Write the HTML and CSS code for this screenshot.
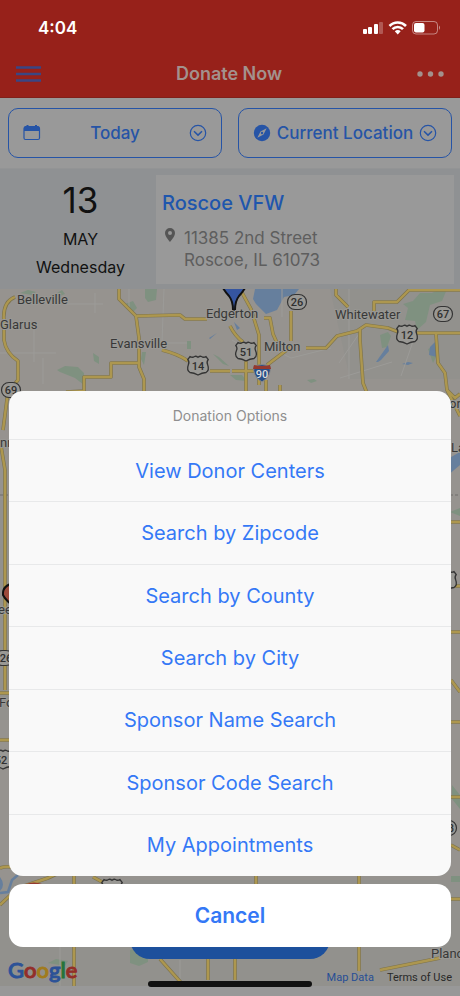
FILE: index.html
```html
<!DOCTYPE html>
<html lang="en">
<head>
<meta charset="utf-8">
<meta name="viewport" content="width=device-width, initial-scale=1">
<title>Donate Now</title>
<link rel="stylesheet" href="styles.css">
</head>
<body>
<div class="app">
  <header class="header">
    <div class="status">
      <span class="time">4:04</span>
      <svg class="status-icons" width="80" height="16" viewBox="0 0 80 16" aria-hidden="true">
        <g fill="#fff">
          <rect x="1" y="9" width="4" height="5" rx="1"/>
          <rect x="6" y="7" width="4" height="7" rx="1"/>
          <rect x="12" y="4" width="4" height="10" rx="1"/>
          <rect x="17" y="2" width="4" height="12" rx="1" opacity=".25"/>
        </g>
        <g fill="none" stroke="#fff" stroke-width="2.6">
          <path d="M27.5 6a11.5 11.5 0 0 1 16.500 0"/>
          <path d="M30.500 9.200a7.300 7.300 0 0 1 10.500 0"/>
        </g>
        <path d="M32.800 11.300a4.300 4.300 0 0 1 5.900 0L35.700 14.500z" fill="#fff"/>
        <rect x="50.500" y="1.500" width="25" height="12.500" rx="3.500" fill="none" stroke="#fff" stroke-opacity=".45"/>
        <rect x="52" y="3" width="10.500" height="9.500" rx="2" fill="#fff"/>
        <path d="M77 5.500q2 2.200 0 4.500z" fill="#fff" opacity=".5"/>
      </svg>
    </div>
    <nav class="nav">
      <button class="icon-button" type="button" aria-label="Menu">
        <svg width="26" height="18" viewBox="0 0 26 18"><path d="M0 2.500h25M0 9h25M0 15.500h25" stroke="#3a4684" stroke-width="2.600"/></svg>
      </button>
      <h1 class="title">Donate Now</h1>
      <button class="icon-button" type="button" aria-label="More">
        <svg width="28" height="18" viewBox="0 0 28 18" fill="#a3918d"><circle cx="4" cy="9" r="2.700"/><circle cx="14.500" cy="9" r="2.700"/><circle cx="25" cy="9" r="2.700"/></svg>
      </button>
    </nav>
  </header>

  <div class="filters">
    <button class="filter" type="button">
      <svg width="18" height="18" viewBox="0 0 18 18"><rect x="1" y="3" width="15.500" height="12.500" rx="1.500" fill="none" stroke="currentColor" stroke-width="1.200"/><path d="M1 7V3.500Q1 2 2.500 2H15q1.500 0 1.500 1.500V7zM3.500 1h2v2h-2zM12 1h2v2h-2z" fill="currentColor"/></svg>
      <span>Today</span>
      <svg width="18" height="18" viewBox="0 0 18 18" fill="none" stroke="currentColor" stroke-width="1.200"><circle cx="9" cy="9" r="7.700"/><path d="M5 7.300l4 3.800 4-3.800" stroke-width="1.500"/></svg>
    </button>
    <button class="filter" type="button">
      <svg width="18" height="18" viewBox="0 0 18 18"><circle cx="9" cy="9" r="8.200" fill="currentColor"/><path d="M13.600 4.200L10.500 10.500 4.400 13.700 7.500 7.500z" fill="#999"/><circle cx="9" cy="9" r="1.200" fill="currentColor"/></svg>
      <span>Current Location</span>
      <svg width="18" height="18" viewBox="0 0 18 18" fill="none" stroke="currentColor" stroke-width="1.200"><circle cx="9" cy="9" r="7.700"/><path d="M5 7.300l4 3.800 4-3.800" stroke-width="1.500"/></svg>
    </button>
  </div>

  <section class="event">
    <div class="date">
      <span class="day">13</span>
      <span>MAY</span>
      <span>Wednesday</span>
    </div>
    <div class="card">
      <h2 class="place">Roscoe VFW</h2>
      <div class="address">
        <svg width="12" height="16" viewBox="0 0 12 16"><path fill-rule="evenodd" d="M6 1a5 5 0 0 0-5 5c0 3.600 5 9 5 9s5-5.400 5-9a5 5 0 0 0-5-5zm0 3a2 2 0 1 1 0 4 2 2 0 0 1 0-4z" fill="#555"/></svg>
        <p>11385 2nd Street<br>Roscoe, IL 61073</p>
      </div>
    </div>
  </section>

  <main class="map">
    <svg class="map-art" viewBox="0 289 460 697" preserveAspectRatio="xMidYMin slice" aria-hidden="true">
      <defs>
        <g id="us-shield"><path d="M-8-9.500q2.500 1.500 4.500 0q1.500-.8 3.500.8q2-1.600 3.500-.8q2 1.500 4.500 0l2.200 3q-2 2.500-.5 5.500q2 5-1.700 7.500q-4 .2-8 2.500q-4-2.300-8-2.500q-3.700-2.500-1.700-7.500q1.500-3-.5-5.500z" fill="#999894" stroke="#343434" stroke-width="1.300"/></g>
        <rect id="state-shield" x="-9.500" y="-7.500" width="19" height="15" rx="7.500" fill="#999894" stroke="#343434" stroke-width="1.200"/>
        <path id="roads" d="M15 297Q2 302 4 322V340Q6 353 18 361V380L8 392 3 430M119 289v10l17 17 3 22v29l5 12v20M137 316l43-1 5 4h22M162 350q16 4 26 11M210 371h20M66 392l18-1v-14h27v-14h28M240 289l11 20 8 26v50M230 326q5 10 13 16M232 371h22M246 360v40M291 311v30M306 348h20l11-12 20-5 9-6 22 3 13 5h59M267 365l25-19M264 318h6l3 16 4 9M336 289v6l12 12M374 311v-9h23l12-12h51M436 334l2 29 7 10 2 17 8 8 5-4M360 330v10l3 43 4 10M266 380v15M280 385v14M0 440l5 30v220M0 693h9M0 740h9M447 390l13 26M451 522h9M451 586h9M451 632h9M451 680l9 12M451 722h9M451 797h9M451 845l9 5M0 868q12-4 22 5M0 905l18-17 30-10 17-8M74 865v121M93 877l13 7M160 959l24 27M208 959v21M235 959v21M256 865v20M359 876v95M380 970l60-12M451 899h9"/>
      </defs>
      <rect y="289" width="460" height="697" fill="#96938f"/>
      <path d="M0 500h70v220H0zM330 289h130v90H350zM0 880h460v106H0z" fill="#92918d"/>
      <g fill="#7f9180">
        <path d="M145 289h12l-1 11-8 2-3-4zM125 304l8-3 4 7-4 4zM57 370l8-4 13 1 6 6v12l-9-7-15-6zM93 353l6 4v7l-5-3zM403 304l10-3 7-8 12 0 8-4h7l-5 12-12 4-4 17-9 8-2-9-10-1 3-12-5-4zM380 335l8-3 3 4-4 11-5 1zM428 349l6-3 3 9-4 8zM187 341h4v8h-4zM213 354l6 3 10 9-6-2zM142 352h4l-2 13-3-6zM450 512l10-4v8zM452 785l8 10v14l-8-10zM451 876h9v6h-9zM130 950l10-2 8 8v6l-9 4-9-3zM48 963l8-4 12 2-3 5z"/>
        <path d="M20 293l8-3 8 2-4 3zM57 293l5-3 3 4-5 2zM230 375h12l5 6-11-1zM307 380l7-1 3 2-6 2z"/>
      </g>
      <g fill="#667f9d">
        <path d="M255 289h44l-5 6-10 2-7 13-11 4-10-10-3-5zM430 347l8-8-1 18-8-2zM376 362l12-17 1 6-8 9-3 2zM402 364l6-2 5 1-5 2zM209 338l8-5-7 6zM444 461l16-9v13l-13 11zM234 322l6 6-3 2zM0 877q6 8 0 14z"/>
      </g>
      <g fill="none" stroke="#9c9b98" stroke-width="1">
        <path d="M0 353h56M34 329v33M65 304h38M95 293v20M129 289v20M164 289l-2 53M127 343h60M43 384v-26M275 350l16 8 40-10M282 289v28M363 328l-24 35M340 378l52-16M417 330l-16 46M349 289v90M232 340l17 10M60 915v71M180 960v26"/>
      </g>
      <path d="M0 495h460" fill="none" stroke="#6e6d6a" stroke-width="1" stroke-dasharray="3 2"/>
      <g fill="none" stroke-linejoin="round">
        <use href="#roads" stroke="#7d734c" stroke-width="3.600"/>
        <use href="#roads" stroke="#ad974f" stroke-width="2.400"/>
      </g>
      <path d="M0 893l8-1 4-12 6-5" fill="none" stroke="#667f9d" stroke-width="2.500"/>
      <path d="M223 288q3 5 6 8 4 5 4 14h2q0-9 4-14 3-3 6-8z" fill="#3555a0" stroke="#111" stroke-width="2"/>
      <path d="M15 583q-13 2-12 12 3 6 12 12z" fill="#9c4a3b" stroke="#111" stroke-width="2"/>
      <use href="#us-shield" x="198" y="366"/><use href="#us-shield" x="246" y="352"/><use href="#us-shield" x="407" y="335"/>
      <use href="#us-shield" x="3" y="760"/><use href="#us-shield" x="112" y="889"/><use href="#us-shield" x="446" y="581"/>
      <use href="#state-shield" x="11" y="390"/><use href="#state-shield" x="297" y="302"/><use href="#state-shield" x="443" y="314"/>
      <use href="#state-shield" x="4" y="658"/><use href="#state-shield" x="447" y="828"/>
      <path d="M254 366q8-3 16 0 2 10-8 16-10-6-8-16z" fill="#294f87" stroke="#888"/><path d="M254 365q8 2 16 0l1 4h-18z" fill="#95392f"/>
      <path d="M26 884q8-3 16 0v5H26z" fill="#95392f"/>
      <g class="route-label">
        <text x="11" y="394">69</text><text x="198" y="370">14</text><text x="246" y="356">51</text><text x="297" y="306">26</text><text x="443" y="318">67</text><text x="407" y="339">12</text><text x="6" y="662">26</text><text x="1" y="764">52</text><text x="451" y="832">8</text><text x="262" y="378" fill="#ddd">90</text>
      </g>
      <g class="town-label">
        <text x="17" y="304">Belleville</text><text x="0" y="329">Glarus</text><text x="110" y="348">Evansville</text><text x="206" y="318">Edgerton</text><text x="264" y="351">Milton</text><text x="335" y="319">Whitewater</text><text x="0" y="447">nn</text><text x="-2" y="614">ee</text><text x="-1" y="707">Fo</text><text x="449" y="408">or</text><text x="451" y="452">La</text><text x="431" y="958">Plano</text>
      </g>
    </svg>
    <div class="map-action" aria-hidden="true"></div>
    <footer class="map-footer">
      <span class="google"><span class="g-blue">G</span><span class="g-red">o</span><span class="g-yellow">o</span><span class="g-blue">g</span><span class="g-green">l</span><span class="g-red">e</span></span>
      <span class="legal"><a class="data-link" href="#">Map Data</a><a href="#">Terms of Use</a></span>
    </footer>
  </main>

  <div class="sheet" role="dialog" aria-labelledby="sheet-title">
    <div class="options">
      <h2 class="options-title" id="sheet-title">Donation Options</h2>
      <div class="option-list">
        <button class="option" type="button">View Donor Centers</button>
        <button class="option" type="button">Search by Zipcode</button>
        <button class="option" type="button">Search by County</button>
        <button class="option" type="button">Search by City</button>
        <button class="option" type="button">Sponsor Name Search</button>
        <button class="option" type="button">Sponsor Code Search</button>
        <button class="option" type="button">My Appointments</button>
      </div>
    </div>
    <button class="cancel" type="button">Cancel</button>
  </div>
  <div class="home-indicator"></div>
</div>
</body>
</html>
```
FILE: styles.css
```css
* { box-sizing: border-box; }
body { margin: 0; font-family: Inter, "Liberation Sans", sans-serif; background: #999; }
h1, h2, p { margin: 0; font-weight: 400; }
button { border: 0; padding: 0; background: none; font: inherit; color: inherit; }
a { color: inherit; text-decoration: none; }
svg { display: block; flex: none; }

.app { position: relative; display: flex; flex-direction: column; min-height: 100vh; }

.header { background: #97211a; padding: 12px 16px 0; border-bottom: 1px solid #80201a; }
.status { display: flex; align-items: center; justify-content: space-between; height: 32px; padding: 0 2px 0 22px; }
.time { color: #fff; font-size: 17px; font-weight: 600; }
.nav { display: flex; align-items: center; justify-content: space-between; height: 53px; padding-top: 6px; }
.title { color: #a3918d; font-size: 18px; font-weight: 600; }

.filters { display: grid; grid-template-columns: 1fr 1fr; gap: 16px; padding: 10px 8px; background: #999; }
.filter { display: flex; align-items: center; justify-content: space-between; height: 50px; padding: 0 14px; border: 1px solid #2654a6; border-radius: 10px; color: #2654a6; font-size: 17px; font-weight: 500; white-space: nowrap; }

.event { display: flex; padding: 6px 6px 5px 0; background: #8f9193; border-top: 1px solid #939495; }
.date { display: flex; flex-direction: column; align-items: center; gap: 8px; width: 156px; padding: 4px 0 0 5px; color: #111; font-size: 16px; line-height: 20px; }
.day { font-size: 35px; line-height: 42px; }
.card { flex: 1; background: #999; padding: 14px 6px 13px; }
.place { color: #1f56ad; font-size: 20px; line-height: 28px; font-weight: 500; }
.address { display: flex; gap: 8px; padding: 10px 0 0 2px; color: #5e5e5e; font-size: 17px; line-height: 22px; }

.map { position: relative; flex: 1; display: flex; flex-direction: column; justify-content: flex-end; overflow: hidden; border-bottom: 10px solid #989898; }
.map-art { position: absolute; inset: 0; width: 100%; height: 100%; }
.town-label { font-family: Roboto, sans-serif; font-size: 13px; fill: #383838; stroke: #999894; stroke-width: 2px; paint-order: stroke; }
.route-label { font-family: Roboto, sans-serif; font-size: 11px; font-weight: 500; fill: #303030; text-anchor: middle; }
.map-action { position: absolute; left: 50%; bottom: 27px; width: 200px; height: 48px; margin-left: -100px; border-radius: 20px; background: #1d509c; }
.map-footer { position: relative; display: flex; align-items: flex-end; justify-content: space-between; padding: 0 8px; font-family: Roboto, sans-serif; }
.google { font-family: Lato, sans-serif; font-size: 22px; line-height: 32px; font-weight: 500; -webkit-text-stroke: 1px; }
.g-blue { color: #2c5297; }
.g-red { color: #922e29; }
.g-yellow { color: #a17b1d; }
.g-green { color: #257438; }
.legal { display: flex; gap: 13px; font-size: 11px; line-height: 16px; color: #292929; }
.data-link { color: #264e96; }

.sheet { position: absolute; left: 9px; right: 9px; bottom: 49px; display: flex; flex-direction: column; gap: 8px; color: #3478f6; }
.options { background: #f9f9f9; border-radius: 14px; overflow: hidden; }
.options-title { padding: 16px 0 14px; color: #8f8f8f; font-size: 14px; line-height: 18px; text-align: center; }
.option-list { display: grid; grid-auto-rows: 1fr; height: 437px; }
.option { border-top: 1px solid #e8e9ea; font-size: 20px; }
.cancel { height: 63px; border-radius: 14px; background: #fff; font-size: 21px; font-weight: 600; }
.home-indicator { position: absolute; left: 50%; bottom: 9px; width: 164px; height: 6px; margin-left: -82px; border-radius: 3px; background: #111; }
```
